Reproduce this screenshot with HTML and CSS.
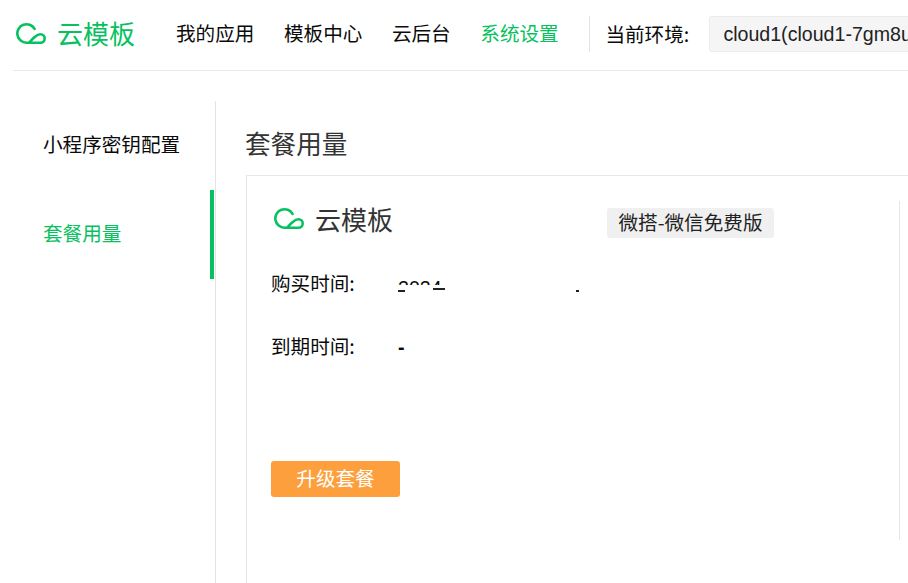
FILE: index.html
```html
<!DOCTYPE html>
<html lang="zh-CN">
<head>
<meta charset="utf-8">
<title>云模板</title>
<link rel="stylesheet" href="styles.css">
</head>
<body>
<div class="page">
  <header class="topbar">
    <div class="brand">
      <svg class="logo" viewBox="0 0 32 24" fill="none"><path d="M18.600 6.850A9.250 9.250 0 1 0 10.600 20.700H24.500A4.200 4.200 0 0 0 24.500 12.300C21 12.300 19.500 14.500 17.500 16L13.800 19.800" stroke="#07c160" stroke-width="2.600" stroke-linecap="round" stroke-linejoin="round"/></svg>
      <span class="brand-name">云模板</span>
    </div>
    <nav class="nav">
      <a class="nav-item">我的应用</a>
      <a class="nav-item">模板中心</a>
      <a class="nav-item">云后台</a>
      <a class="nav-item active">系统设置</a>
    </nav>
    <div class="env">
      <span class="env-label">当前环境:</span>
      <div class="env-select">cloud1(cloud1-7gm8u</div>
    </div>
  </header>
  <div class="body">
    <aside class="side">
      <div class="side-item">小程序密钥配置</div>
      <div class="side-item current">套餐用量</div>
    </aside>
    <main class="main">
      <h1 class="title">套餐用量</h1>
      <section class="card">
        <div class="plan">
          <div class="plan-head">
            <div class="plan-brand">
              <svg class="logo" viewBox="0 0 32 24" fill="none"><path d="M18.600 6.850A9.250 9.250 0 1 0 10.600 20.700H24.500A4.200 4.200 0 0 0 24.500 12.300C21 12.300 19.500 14.500 17.500 16L13.800 19.800" stroke="#07c160" stroke-width="2.600" stroke-linecap="round" stroke-linejoin="round"/></svg>
              <span class="plan-name">云模板</span>
            </div>
            <span class="badge">微搭-微信免费版</span>
          </div>
          <div class="row first">
            <span class="row-label">购买时间:</span>
            <span class="row-value masked">2024<i class="mask"><b class="frag frag-a"></b><b class="frag frag-b"></b><b class="frag frag-c"></b></i></span>
          </div>
          <div class="row"><span class="row-label">到期时间:</span><span class="row-value dash">-</span></div>
          <button class="upgrade">升级套餐</button>
        </div>
        <div class="divider"></div>
      </section>
    </main>
  </div>
</div>
</body>
</html>
```
FILE: styles.css
```css
* { box-sizing: border-box; }
html, body { margin: 0; height: 100%; overflow: hidden; background: #fff; }
body { font-family: "Noto Sans CJK SC", "Liberation Sans", sans-serif; font-size: 19.6px; color: #0a0a0a; }
.page { width: 908px; height: 583px; overflow: hidden; padding-left: 13px; display: flex; flex-direction: column; }
.topbar { height: 71px; border-bottom: 1px solid #e8e8e8; display: flex; align-items: flex-start; padding: 16px 0 0 3px; flex: none; width: 1100px; }
.brand { display: flex; align-items: center; height: 36px; width: 161px; margin-left: -1px; flex: none; }
.logo { width: 32px; height: 24px; flex: none; display: block; margin-left: 1px; }
.brand-name { font-size: 26px; color: #07c160; margin: -2px 0 0 9px; line-height: 36px; }
.nav { display: flex; gap: 29.600px; flex: none; line-height: 34px; height: 36px; padding-right: 30.700px; }
.nav-item.active { color: #07c160; }
.env { display: flex; align-items: center; height: 36px; border-left: 1px solid #e3e3e3; padding-left: 15px; flex: none; }
.env-label { width: 104px; margin-top: -2px; }
.env-select { font-family: "Liberation Sans", sans-serif; width: 330px; height: 36px; line-height: 34px; padding-left: 13px; background: #f5f5f5; border: 1px solid #ececec; border-radius: 3px; color: #222; white-space: nowrap; overflow: hidden; }
.body { display: flex; flex: 1; min-height: 0; margin: 30px 0 0 -13px; }
.side { width: 216px; flex: none; border-right: 1px solid #e3e3e3; padding-right: 1px; }
.side-item { height: 89px; line-height: 86px; padding-left: 43px; }
.side-item.current { color: #07c160; border-right: 4px solid #07c160; }
.main { flex: 1; padding-left: 30px; min-width: 0; margin-left: -1px; }
.title { margin: 22px 0 0; font-size: 25.600px; font-weight: 400; line-height: 40px; color: #333; }
.card { width: 800px; height: 500px; margin: 12px 0 0 1px; border: 1px solid #e6e6e6; display: flex; align-items: flex-start; padding: 24px 0 0 24px; }
.plan { width: 628px; flex: none; }
.plan-head { display: flex; justify-content: space-between; align-items: center; height: 38px; padding-left: 2px; padding-right: 124px; }
.plan-brand { display: flex; align-items: center; }
.plan-name { font-size: 26px; color: #333; margin: -2px 0 0 9px; }
.badge { height: 30px; line-height: 27px; padding: 0 11.500px; margin: 8px 1px 0 0; background: #f0f0f0; border-radius: 3px; color: #222; }
.row { height: 63px; line-height: 63px; display: flex; }
.row.first { margin-top: 13px; }
.row-label { width: 127px; flex: none; }
.row-value { font-family: "Liberation Sans", sans-serif; position: relative; }
.row-value.masked { padding-top: 6px; }
.row-value.dash { padding-top: 2px; font-weight: 700; }
.mask { position: absolute; left: 0; width: 200px; top: 34px; height: 24px; background: #fff; }
.frag { position: absolute; height: 2px; background: #222; }
.frag-a { left: 0; top: 5px; width: 7px; }
.frag-b { left: 35px; top: 3px; width: 12px; }
.frag-c { left: 178px; top: 5px; width: 3px; }
.upgrade { display: block; margin-top: 84px; width: 129px; height: 36px; padding: 0 0 3px; border: 0; border-radius: 3px; background: #fd9f3c; color: #fff; font: inherit; }
.divider { width: 1px; height: 339px; background: #e6e6e6; margin-top: 1px; flex: none; }
```
